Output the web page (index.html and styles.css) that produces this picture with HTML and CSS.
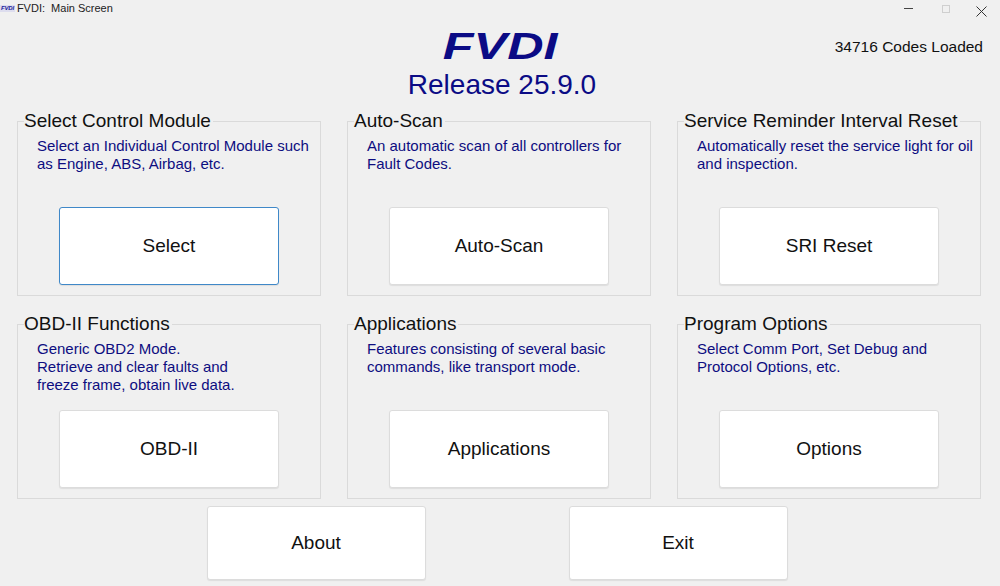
FILE: index.html
```html
<!DOCTYPE html>
<html lang="en">
<head>
  <meta charset="UTF-8">
  <title>FVDI: Main Screen</title>
  <link rel="stylesheet" href="styles.css">
</head>
<body>
  <div class="titlebar">
    <div class="app-title">
      <span class="app-icon">FVDI</span>
      <span>FVDI:&nbsp; Main Screen</span>
    </div>
    <div class="win-controls">
      <span class="win-btn min"></span>
      <span class="win-btn max"></span>
      <span class="win-btn close">
        <svg width="11" height="11" viewBox="0 0 11 11"><path d="M0.5 0.5 L10.5 10.5 M10.5 0.5 L0.5 10.5" stroke="#333" stroke-width="1"/></svg>
      </span>
    </div>
  </div>

  <div class="header">
    <div></div>
    <div class="brand">
      <div class="logo"><span>FVDI</span></div>
      <div class="release">Release 25.9.0</div>
    </div>
    <div class="codes">34716 Codes Loaded</div>
  </div>

  <div class="groups">
    <fieldset class="group">
      <legend>Select Control Module</legend>
      <div class="desc">Select an Individual Control Module such<br>as Engine, ABS, Airbag, etc.</div>
      <button class="btn focused">Select</button>
    </fieldset>

    <fieldset class="group">
      <legend>Auto-Scan</legend>
      <div class="desc">An automatic scan of all controllers for<br>Fault Codes.</div>
      <button class="btn">Auto-Scan</button>
    </fieldset>

    <fieldset class="group">
      <legend>Service Reminder Interval Reset</legend>
      <div class="desc">Automatically reset the service light for oil<br>and inspection.</div>
      <button class="btn">SRI Reset</button>
    </fieldset>

    <fieldset class="group">
      <legend>OBD-II Functions</legend>
      <div class="desc">Generic OBD2 Mode.<br>Retrieve and clear faults and<br>freeze frame, obtain live data.</div>
      <button class="btn">OBD-II</button>
    </fieldset>

    <fieldset class="group">
      <legend>Applications</legend>
      <div class="desc">Features consisting of several basic<br>commands, like transport mode.</div>
      <button class="btn">Applications</button>
    </fieldset>

    <fieldset class="group">
      <legend>Program Options</legend>
      <div class="desc">Select Comm Port, Set Debug and<br>Protocol Options, etc.</div>
      <button class="btn">Options</button>
    </fieldset>
  </div>

  <div class="bottom">
    <button class="btn wide">About</button>
    <button class="btn wide">Exit</button>
  </div>
</body>
</html>
```

FILE: styles.css
```css
body {
  margin: 0;
  background-color: #f0f0f0;
  font-family: "Liberation Sans", Arial, sans-serif;
  color: #111;
  width: 1000px;
  height: 586px;
  overflow: hidden;
}

/* window title bar */
.titlebar {
  height: 17px;
  display: flex;
  justify-content: space-between;
  align-items: flex-start;
}

.app-title {
  display: flex;
  align-items: center;
  gap: 2px;
  font-size: 11px;
  color: #222;
  padding-top: 2px;
  line-height: 13px;
}

.app-icon {
  font-size: 6px;
  font-weight: bold;
  font-style: italic;
  color: #1a1a9a;
  background-color: #dde;
  line-height: 7px;
  padding: 0 1px;
  letter-spacing: -0.2px;
}

.win-controls {
  display: flex;
  align-items: center;
  padding-top: 3px;
}

.win-btn {
  display: block;
  width: 37px;
  height: 11px;
  position: relative;
}

.win-btn.min::after {
  content: "";
  position: absolute;
  left: 14px;
  top: 5px;
  width: 9px;
  height: 1px;
  background-color: #444;
}

.win-btn.max {
  width: 48px;
}

.win-btn.max::after {
  content: "";
  position: absolute;
  left: 15px;
  top: 2px;
  width: 6px;
  height: 6px;
  border: 1px solid #cfcfcf;
}

.win-btn.close {
  width: 24px;
  padding-left: 1px;
}

/* logo header */
.header {
  display: grid;
  grid-template-columns: 1fr auto 1fr;
  padding-top: 9px;
}

.brand {
  text-align: center;
  color: #0b0b85;
}

.logo {
  font-size: 37px;
  line-height: 42px;
  font-weight: bold;
  font-style: italic;
}

.logo span {
  display: inline-block;
  transform: scaleX(1.36);
}

.release {
  font-size: 28px;
  line-height: 34px;
  padding-left: 4px;
}

.codes {
  text-align: right;
  font-size: 15.5px;
  line-height: 18px;
  padding: 12px 17px 0 0;
  color: #111;
}

/* group boxes */
.groups {
  display: grid;
  grid-template-columns: repeat(3, 304px);
  column-gap: 26px;
  row-gap: 17px;
  padding-left: 17px;
  margin-top: 8px;
}

.group {
  margin: 0;
  padding: 0 0 10px 6px;
  border: 1px solid #dadada;
  min-width: 0;
}

.group legend {
  padding: 0 2px 0 0;
  font-size: 19px;
  line-height: 22px;
  color: #111;
}

.desc {
  margin: 5px 0 0 13px;
  height: 54px;
  font-size: 15px;
  line-height: 18px;
  color: #0d0d80;
}

.btn {
  display: block;
  width: 220px;
  height: 78px;
  margin: 16px 0 0 35px;
  background-color: #fff;
  border: 1px solid #dcdcdc;
  border-radius: 3px;
  box-shadow: 0 1px 1px rgba(0, 0, 0, 0.08);
  font-family: "Liberation Sans", Arial, sans-serif;
  font-size: 19px;
  color: #111;
  padding: 0;
}

.btn.focused {
  border-color: #3f88c8;
}

.bottom {
  display: flex;
  justify-content: center;
  gap: 143px;
  margin-top: 7px;
  padding-right: 6px;
}

.bottom .btn.wide {
  margin: 0;
  width: 219px;
  height: 74px;
}
```
